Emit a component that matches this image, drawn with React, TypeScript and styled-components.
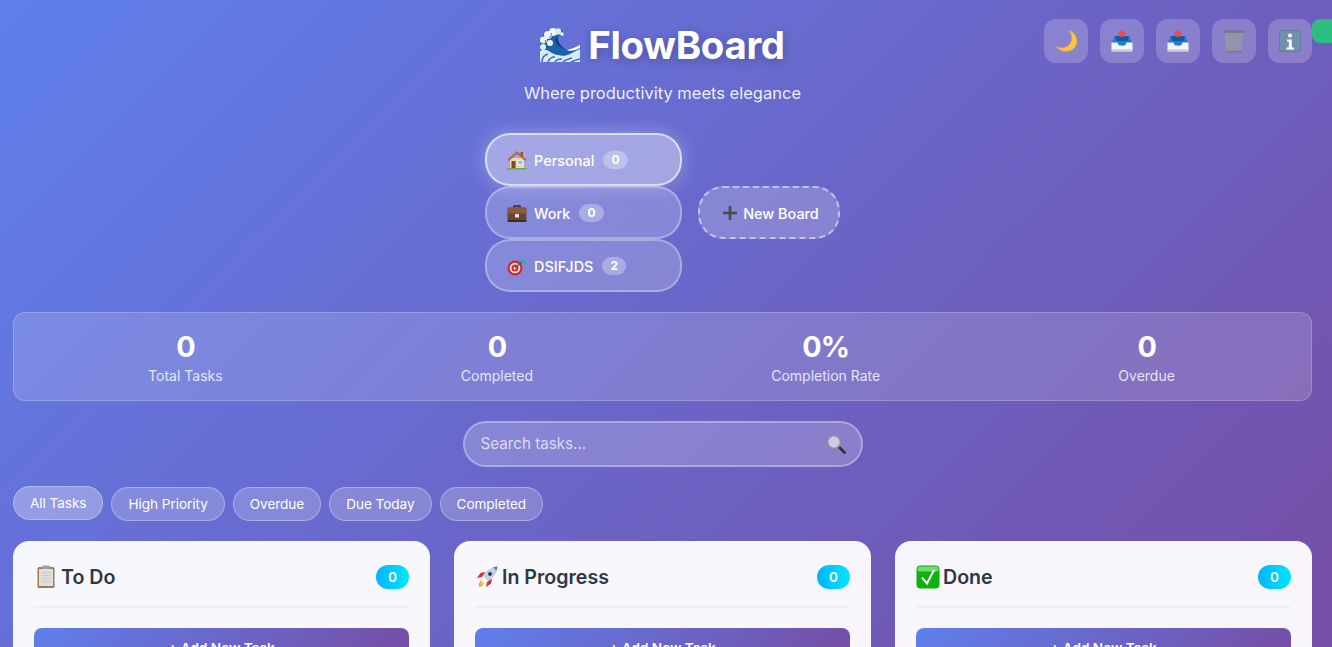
import React from "react";
import styled, { createGlobalStyle } from "styled-components";

const Global = createGlobalStyle`
  html, body { margin: 0; padding: 0; height: 647px; overflow: hidden; }
  body { font-family: Inter, "Liberation Sans", sans-serif; }
  * { box-sizing: border-box; }
  input::placeholder { color: rgba(255,255,255,.7); opacity: 1; }
`;

const Page = styled.div`
  position: relative;
  height: 647px;
  overflow: hidden;
  padding: 19px 20px 0 13px;
  background: linear-gradient(135deg, #5f7fec 0%, #764ba2 100%) no-repeat;
  background-size: 100% 760px;
`;
const Toast = styled.div`
  position: absolute;
  left: 1312px;
  top: 19px;
  width: 60px;
  height: 24px;
  border-radius: 8px;
  background: #2dbd7f;
`;
const Header = styled.header`
  display: grid;
  grid-template-columns: 1fr auto 1fr;
  height: 114px;
`;
const Brand = styled.div`
  grid-column: 2;
  display: flex;
  flex-direction: column;
  align-items: center;
`;
const Title = styled.h1`
  display: flex;
  align-items: center;
  gap: 8px;
  margin: 2px 0 0;
  height: 48px;
  color: #fff;
  font-size: 38.4px;
  line-height: 48px;
  font-weight: 700;
  letter-spacing: -0.3px;
  text-shadow: 0 2px 10px rgba(0, 0, 0, 0.25);
`;
const Subtitle = styled.p`
  margin: 12px 0 0;
  color: rgba(255, 255, 255, 0.9);
  font-size: 16.5px;
  line-height: 24px;
`;
const Actions = styled.div`
  grid-column: 3;
  justify-self: end;
  display: flex;
  gap: 12px;
`;
const IconButton = styled.button`
  width: 44px;
  height: 44px;
  padding: 0;
  border: 0;
  border-radius: 12px;
  background: rgba(255, 255, 255, 0.2);
  display: flex;
  align-items: center;
  justify-content: center;
`;
const Boards = styled.section`
  display: flex;
  justify-content: center;
  align-items: center;
  gap: 16px;
`;
const BoardColumn = styled.div`
  width: 197px;
  display: flex;
  flex-direction: column;
`;
const BoardTab = styled.div<{ $active?: boolean }>`
  height: 53px;
  padding: 1px 20px 0;
  display: flex;
  align-items: center;
  gap: 7px;
  border-radius: 25px;
  color: #fff;
  font-size: 14.4px;
  font-weight: 500;
  letter-spacing: 0.05px;
  border: 2px solid rgba(255, 255, 255, ${(p) => (p.$active ? 0.6 : 0.3)});
  background: rgba(255, 255, 255, ${(p) => (p.$active ? 0.4 : 0.2)});
  box-shadow: ${(p) => (p.$active ? "0 0 20px rgba(255,255,255,.3)" : "none")};
`;
const Badge = styled.span`
  height: 18px;
  margin-left: 2px;
  margin-bottom: 1px;
  padding: 0 8px;
  border-radius: 10px;
  background: rgba(255, 255, 255, 0.3);
  font-size: 12px;
  font-weight: 700;
  line-height: 17px;
`;
const NewBoard = styled.div`
  width: 142px;
  height: 53px;
  padding: 1px 0 0 4px;
  display: flex;
  align-items: center;
  justify-content: center;
  gap: 6px;
  border-radius: 25px;
  border: 2px dashed rgba(255, 255, 255, 0.5);
  background: rgba(255, 255, 255, 0.2);
  color: #fff;
  font-size: 14.4px;
  font-weight: 500;
`;
const Stats = styled.section`
  margin-top: 20px;
  height: 89px;
  padding: 0 17px 0 15px;
  display: flex;
  justify-content: space-around;
  align-items: center;
  border-radius: 12px;
  border: 1px solid rgba(255, 255, 255, 0.2);
  background: rgba(255, 255, 255, 0.15);
  color: #fff;
  text-align: center;
`;
const StatValue = styled.div`
  font-size: 28.8px;
  line-height: 35px;
  font-weight: 700;
  letter-spacing: -1px;
`;
const StatLabel = styled.div`
  font-size: 14px;
  line-height: 17px;
  margin-top: 3px;
  opacity: 0.8;
`;
const SearchWrap = styled.div`
  position: relative;
  width: 400px;
  margin: 20px auto 0;
`;
const SearchInput = styled.input`
  display: block;
  width: 100%;
  height: 46px;
  padding: 0 48px 2px 16px;
  border-radius: 23px;
  border: 2px solid rgba(255, 255, 255, 0.3);
  background: rgba(255, 255, 255, 0.2);
  color: #fff;
  font: 15.2px Inter, sans-serif;
  outline: none;
`;
const SearchIcon = styled.span`
  position: absolute;
  right: 17px;
  top: 13px;
  display: flex;
`;
const Filters = styled.nav`
  margin-top: 20px;
  display: flex;
  gap: 8px;
`;
const Filter = styled.div<{ $active?: boolean }>`
  height: 34px;
  padding: 0 16px;
  display: flex;
  align-items: center;
  border-radius: 20px;
  color: #fff;
  font-size: 13.6px;
  letter-spacing: -0.06px;
  border: 1px solid rgba(255, 255, 255, 0.3);
  background: rgba(255, 255, 255, ${(p) => (p.$active ? 0.3 : 0.2)});
  transform: ${(p) => (p.$active ? "translateY(-1px)" : "none")};
`;
const Columns = styled.main`
  margin-top: 20px;
  display: grid;
  grid-template-columns: repeat(3, 1fr);
  gap: 24px;
`;
const Column = styled.section`
  height: 240px;
  padding: 24px 21px;
  border-radius: 16px;
  background: rgba(255, 255, 255, 0.95);
`;
const ColumnHead = styled.div`
  height: 43px;
  display: flex;
  align-items: flex-start;
  justify-content: space-between;
  border-bottom: 2px solid #f0f0f0;
`;
const ColumnTitle = styled.h2`
  margin: 0;
  height: 24px;
  display: flex;
  align-items: center;
  gap: 3px;
  color: #2d3748;
  font-size: 19.6px;
  font-weight: 600;
`;
const Count = styled.span`
  width: 33px;
  height: 24px;
  border-radius: 12px;
  background: linear-gradient(90deg, #00b4fe, #00e6ff);
  color: #fff;
  font-size: 13.6px;
  font-weight: 600;
  display: flex;
  align-items: center;
  justify-content: center;
`;
const AddButton = styled.button`
  display: block;
  width: 100%;
  height: 40px;
  margin-top: 20px;
  border: 0;
  border-radius: 8px;
  background: linear-gradient(135deg, #5f7fec, #764ba2);
  color: #fff;
  font: 600 13.6px Inter, sans-serif;
`;
const Glyph = styled.svg`
  flex: none;
  display: block;
`;

const Moon = () => (
  <Glyph width="24" height="24" viewBox="0 0 24 24">
    <path d="M15.500 1.500C20 3.500 23 7.500 23 12c0 6-5 10.500-11 10.500-4 0-8-2-10.500-5.500 2 1.300 5 2.200 7.500 1.800 6-.8 9.500-6 8.500-11.300-.3-2-1-3.800-2-6z" fill="#f6c544" stroke="#e0a030" strokeWidth=".5" />
  </Glyph>
);
const Outbox = () => (
  <Glyph width="24" height="24" viewBox="0 0 24 24">
    <path d="M2 13l3-6h14l3 6v8.500H2z" fill="#1d7fc8" />
    <path d="M5 7h14l-1.500 5h-11z" fill="#0a5ea8" />
    <path d="M12 .8l4 3.500-2 3.500h-4l-2-3.500z" fill="#f0484f" />
    <path d="M1.500 13.500h6l1.500 3h6l1.500-3h6v8a1 1 0 0 1-1 1h-19a1 1 0 0 1-1-1z" fill="#f4f4f6" />
    <path d="M1.500 20.500h21v1a1 1 0 0 1-1 1h-19a1 1 0 0 1-1-1z" fill="#c5c8ce" />
  </Glyph>
);
const Trash = () => (
  <Glyph width="24" height="24" viewBox="0 0 24 24">
    <defs>
      <pattern id="mesh" width="1.600" height="1.600" patternUnits="userSpaceOnUse" patternTransform="rotate(45)">
        <rect width="1.600" height="1.600" fill="#a2a2b8" />
        <path d="M0 0h1.600M0 0v1.600" stroke="#6f7182" strokeWidth=".5" />
      </pattern>
    </defs>
    <path d="M2.500 3h19l-1.800 19.500a1 1 0 0 1-1 .9H5.300a1 1 0 0 1-1-.9z" fill="url(#mesh)" />
    <path d="M1.500 1.500h21v2.300h-21z" fill="#74787f" />
    <path d="M4.300 22h15.400v1.300H4.300z" fill="#74787f" />
  </Glyph>
);
const Info = () => (
  <Glyph width="24" height="24" viewBox="0 0 24 24">
    <rect x="1" y="1" width="22" height="22" rx="4" fill="#5a7a98" />
    <rect x="1.800" y="1.800" width="20.400" height="20.400" rx="3.400" fill="#7090ac" />
    <circle cx="12" cy="6.500" r="2" fill="#fff" />
    <path d="M9 10.500h4.800v8H16v2H8.500v-2h2.300v-6H9z" fill="#fff" />
  </Glyph>
);
const Wave = () => (
  <Glyph width="40" height="34" viewBox="0 0 40 34">
    <path d="M0 34V14C2 6 8 0 16 0c4 0 8 3 8 7-2-1-5 0-6 3 0 4 3 9 9 12 4-1 9-3 13-5v17z" fill="#1b60aa" />
    <path d="M18 9c-1 4 2 9 7 12-4-1-9-5-10-9z" fill="#0c3c84" />
    <circle cx="8" cy="7" r="4" fill="#f1f6f9" />
    <circle cx="13" cy="4" r="4" fill="#f1f6f9" />
    <circle cx="18" cy="3.500" r="3.200" fill="#dcebf3" />
    <circle cx="22" cy="6" r="1.800" fill="#f1f6f9" />
    <circle cx="3.500" cy="12" r="3.500" fill="#f1f6f9" />
    <circle cx="3" cy="19" r="3" fill="#e4eff5" />
    <circle cx="10" cy="15" r="3" fill="#f1f6f9" />
    <path d="M11 5c1 2 0 4-2 5M5 12c1 1 1 3 0 4" stroke="#2f78ba" strokeWidth="1" fill="none" />
    <path d="M0 34V23c5-3 9 0 12 2 6 3 13 4 18 1 4-2 7-4 10-5v13z" fill="#dbe9f2" />
    <path d="M2 34c0-4 2-7 6-8M8 34c1-3 3-5 7-5M15 34c1-2 3-3 7-3M23 34c2-2 5-3 9-4M31 34c2-1 5-2 9-3" stroke="#2c74b8" strokeWidth="1.500" fill="none" />
    <path d="M27 22c4-1 9-3 13-5v3c-4 2-9 4-13 2z" fill="#fff" />
  </Glyph>
);
const House = () => (
  <Glyph width="20" height="20" viewBox="0 0 20 20">
    <rect x="3" y="8" width="14" height="10" fill="#ecd7b0" />
    <path d="M10 1L.5 9.500 2 11l8-7 8 7 1.500-1.500z" fill="#b86a3c" />
    <path d="M13.500 2H16v5l-2.500-2.200z" fill="#995433" />
    <rect x="4.500" y="11" width="4" height="7" fill="#7a4a2c" />
    <rect x="11" y="10.500" width="4.500" height="4" fill="#7cc4e6" stroke="#fff" strokeWidth=".6" />
    <path d="M0 18h20v1.500H0z" fill="#6cae44" />
  </Glyph>
);
const Briefcase = () => (
  <Glyph width="20" height="20" viewBox="0 0 20 20">
    <path d="M7 5V3h6v2" fill="none" stroke="#3b2a22" strokeWidth="1.400" />
    <rect x=".5" y="4.500" width="19" height="14" rx="1.500" fill="#6a4630" />
    <rect x=".5" y="4.500" width="19" height="6" rx="1.500" fill="#875c3e" />
    <rect x="8" y="11" width="4" height="3.500" rx=".5" fill="#e8e4da" />
    <path d="M.5 17h19v1a1 1 0 0 1-1 1h-17a1 1 0 0 1-1-1z" fill="#3e2a1e" />
  </Glyph>
);
const Target = () => (
  <Glyph width="20" height="20" viewBox="0 0 20 20">
    <circle cx="8" cy="12" r="7.500" fill="#d3272f" />
    <circle cx="8" cy="12" r="5.300" fill="#f3e8e2" />
    <circle cx="8" cy="12" r="3.500" fill="#d3272f" />
    <circle cx="8" cy="12" r="1.500" fill="#f3e8e2" />
    <path d="M8 12l8-7" stroke="#555" strokeWidth="1.200" />
    <path d="M14 6l1-4 1.500 2h3l-2 3.500z" fill="#27b5b0" />
  </Glyph>
);
const Clipboard = () => (
  <Glyph width="24" height="24" viewBox="0 0 24 24">
    <rect x="3.500" y="2" width="17" height="21" rx="1.500" fill="#a87846" />
    <rect x="5" y="4" width="14" height="17" fill="#e0e0e0" />
    <path d="M7 7.500h10M7 10.500h10M7 13.500h10M7 16.500h10" stroke="#cfcfcf" strokeWidth="1.500" />
    <rect x="8" y=".5" width="8" height="3.500" rx="1" fill="#9aa0a8" />
  </Glyph>
);
const Rocket = () => (
  <Glyph width="24" height="24" viewBox="0 0 24 24">
    <path d="M4 22c-.5-3 .5-5.500 2-6.500l3 3c-1 1.500-3 3-5 3.500z" fill="#f7a11a" />
    <path d="M5.500 20c0-1.500.5-3 1.500-3.500l1 1c-.5 1-1.500 2-2.500 2.500z" fill="#ffe14a" />
    <path d="M7 12l-5 1 3.500-5 5-1z" fill="#e22b2b" />
    <path d="M12 17l-1 5 5-3.500 1-5z" fill="#e22b2b" />
    <path d="M22.500 1.500c-6 .5-11 3.500-14.500 9.500l5 5c6-3.500 9-8.500 9.500-14.500z" fill="#c3d0de" />
    <path d="M22.500 1.500c-1.500.1-3 .4-4.300 1l3.300 3.300c.6-1.300.9-2.800 1-4.300z" fill="#4a82d6" />
    <circle cx="15" cy="9" r="2.400" fill="#20305a" stroke="#e8edf3" strokeWidth=".8" />
  </Glyph>
);
const Check = () => (
  <Glyph width="24" height="24" viewBox="0 0 24 24">
    <rect x=".5" y=".5" width="23" height="23" rx="4" fill="#0fb00f" />
    <rect x="1.500" y="1.500" width="21" height="5" rx="2.500" fill="#6fdc6f" />
    <path d="M6 12.500l5 6 7-13.500" fill="none" stroke="#fff" strokeWidth="2" />
  </Glyph>
);
const Magnifier = () => (
  <Glyph width="20" height="20" viewBox="0 0 20 20">
    <path d="M13 13l5.500 5.500" stroke="#333" strokeWidth="2.800" strokeLinecap="round" />
    <circle cx="8" cy="8" r="6.500" fill="#cfc8ea" stroke="#8d8d95" strokeWidth="1.600" />
  </Glyph>
);
const Plus = () => (
  <Glyph width="14" height="14" viewBox="0 0 14 14">
    <path d="M5.700 0h2.600v5.700H14v2.600H8.300V14H5.700V8.300H0V5.700h5.700z" fill="#4a4a4f" />
  </Glyph>
);

const stats = [
  ["0", "Total Tasks"],
  ["0", "Completed"],
  ["0%", "Completion Rate"],
  ["0", "Overdue"],
];
const filters = ["All Tasks", "High Priority", "Overdue", "Due Today", "Completed"];
const boards = [
  { icon: <House />, name: "Personal", count: 0, active: true },
  { icon: <Briefcase />, name: "Work", count: 0 },
  { icon: <Target />, name: "DSIFJDS", count: 2 },
];
const columns = [
  { icon: <Clipboard />, name: "To Do" },
  { icon: <Rocket />, name: "In Progress" },
  { icon: <Check />, name: "Done" },
];

export default function App() {
  return (
    <Page>
      <Global />
      <Toast />
      <Header>
        <Brand>
          <Title>
            <Wave />
            FlowBoard
          </Title>
          <Subtitle>Where productivity meets elegance</Subtitle>
        </Brand>
        <Actions>
          <IconButton aria-label="Theme"><Moon /></IconButton>
          <IconButton aria-label="Export"><Outbox /></IconButton>
          <IconButton aria-label="Import"><Outbox /></IconButton>
          <IconButton aria-label="Trash"><Trash /></IconButton>
          <IconButton aria-label="Info"><Info /></IconButton>
        </Actions>
      </Header>
      <Boards>
        <BoardColumn>
          {boards.map((b) => (
            <BoardTab key={b.name} $active={b.active}>
              {b.icon}
              {b.name}
              <Badge>{b.count}</Badge>
            </BoardTab>
          ))}
        </BoardColumn>
        <NewBoard>
          <Plus />
          New Board
        </NewBoard>
      </Boards>
      <Stats>
        {stats.map(([v, l]) => (
          <div key={l}>
            <StatValue>{v}</StatValue>
            <StatLabel>{l}</StatLabel>
          </div>
        ))}
      </Stats>
      <SearchWrap>
        <SearchInput placeholder="Search tasks..." />
        <SearchIcon><Magnifier /></SearchIcon>
      </SearchWrap>
      <Filters>
        {filters.map((f, i) => (
          <Filter key={f} $active={i === 0}>{f}</Filter>
        ))}
      </Filters>
      <Columns>
        {columns.map((c) => (
          <Column key={c.name}>
            <ColumnHead>
              <ColumnTitle>
                {c.icon}
                {c.name}
              </ColumnTitle>
              <Count>0</Count>
            </ColumnHead>
            <AddButton>+ Add New Task</AddButton>
          </Column>
        ))}
      </Columns>
    </Page>
  );
}
